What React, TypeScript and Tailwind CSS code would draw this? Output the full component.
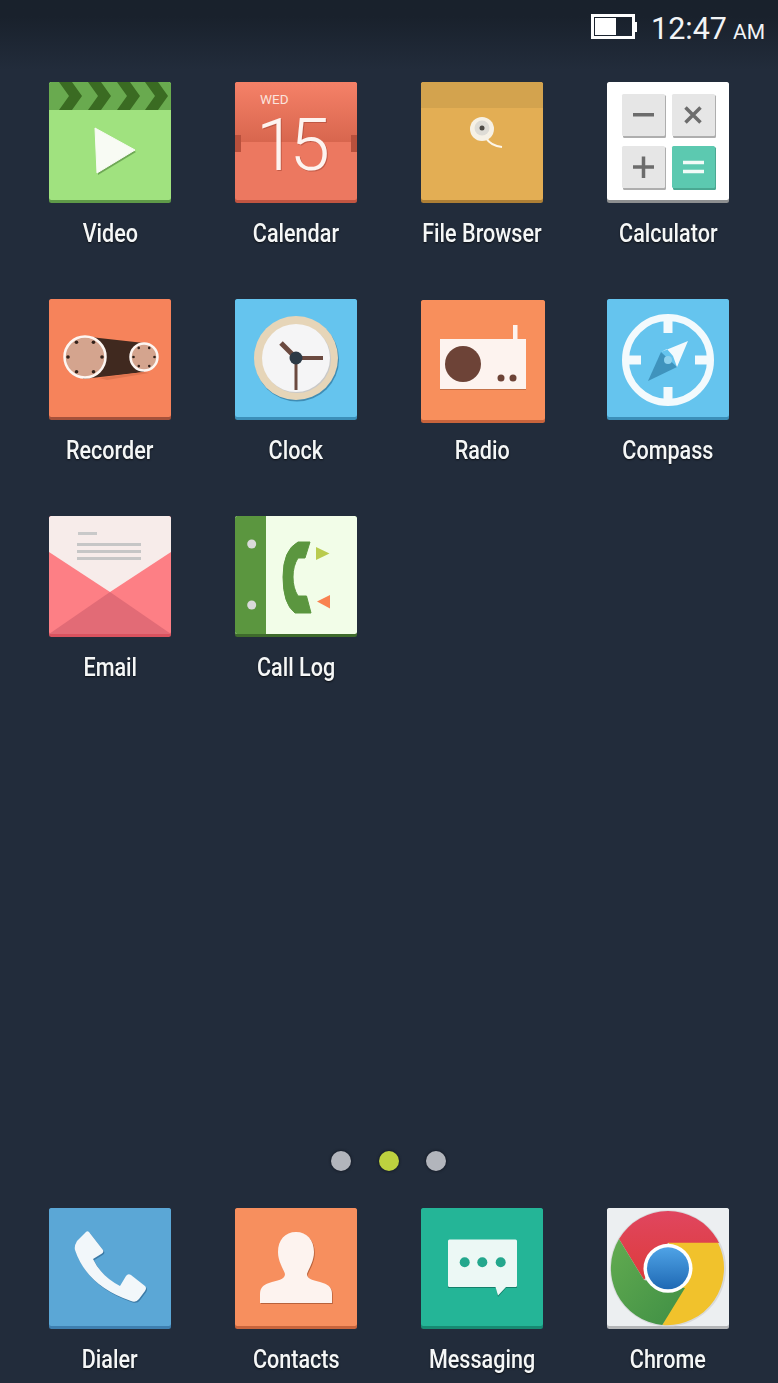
import React from "react";

function Tile({ fill, strip, children, w = 122, h = 121 }: { fill: string; strip: string; children?: React.ReactNode; w?: number; h?: number }) {
  return (
    <>
      <rect x="0" y="0" width={w} height={h} rx="2.5" fill={strip} />
      <rect x="0" y="0" width={w} height={h - 3} rx="2.5" fill={fill} />
      {children}
    </>
  );
}

const Video = () => (
  <Tile fill="#a0e27f" strip="#5f9a48">
    <path d="M2.5 0H119.5Q122 0 122 2.5V28H0V2.5Q0 0 2.5 0Z" fill="#69aa4f" />
    {[33, 62, 91, 119].map((t) => (
      <polygon key={t} points={`${t - 10},0 ${t},14 ${t - 10},28 ${t - 23},28 ${t - 13},14 ${t - 23},0`} fill="#3a6b22" />
    ))}
    <polygon points="47,48 87,70 49,93" fill="#6fa856" />
    <polygon points="46,46 86,68 48,91" fill="#f8fbf4" stroke="#f8fbf4" strokeWidth="1" strokeLinejoin="round" />
  </Tile>
);

const Calendar = () => (
  <Tile fill="#ec7860" strip="#c25541">
    <defs>
      <linearGradient id="calTop" x1="0" y1="0" x2="0" y2="1">
        <stop offset="0" stopColor="#f58168" />
        <stop offset="1" stopColor="#d8664e" />
      </linearGradient>
    </defs>
    <path d="M2.5 0H119.5Q122 0 122 2.5V60H0V2.5Q0 0 2.5 0Z" fill="url(#calTop)" />
    <rect x="0" y="53" width="6" height="17" fill="#b8503c" />
    <rect x="116" y="53" width="6" height="17" fill="#b8503c" />
    <text x="25" y="22" fontFamily="Roboto, sans-serif" fontSize="13.5" fill="#fbe3dc">WED</text>
    <text x="21" y="87.5" fontFamily="Roboto, sans-serif" fontWeight="300" fontSize="73" letterSpacing="-7" fill="#fdf3ef" className="[filter:drop-shadow(1.5px_1.5px_0_rgba(168,74,56,0.6))]">15</text>
  </Tile>
);

const FileBrowser = () => (
  <Tile fill="#e3ae54" strip="#ae7f35">
    <path d="M2.5 0H119.5Q122 0 122 2.5V26H0V2.5Q0 0 2.5 0Z" fill="#d3a34e" />
    <path d="M65 56Q70 64 81 65" fill="none" stroke="#fdf6e8" strokeWidth="2.2" />
    <circle cx="61" cy="47" r="12" fill="#f6f1e6" />
    <circle cx="61" cy="46" r="7.5" fill="#dedcd6" />
    <circle cx="61" cy="46" r="2.5" fill="#4d4a45" />
  </Tile>
);

const CalcKey = ({ x, y, fill = "#e6e6e6", shade = "#aeaeae", children }: { x: number; y: number; fill?: string; shade?: string; children?: React.ReactNode }) => (
  <g transform={`translate(${x},${y})`}>
    <rect x="1" y="1" width="43" height="43" rx="1.5" fill={shade} />
    <rect x="0" y="0" width="43" height="42" rx="1.5" fill={fill} />
    {children}
  </g>
);

const Calculator = () => (
  <Tile fill="#ffffff" strip="#8d8f90">
    <CalcKey x={15} y={12}>
      <rect x="11" y="19" width="21" height="3.5" fill="#6c6c6c" />
    </CalcKey>
    <CalcKey x={65} y={12}>
      <path d="M13.5 13.5L28.5 28.5M28.5 13.5L13.5 28.5" stroke="#6c6c6c" strokeWidth="3.5" />
    </CalcKey>
    <CalcKey x={15} y={64}>
      <path d="M11 21H32M21.5 10.5V32" stroke="#6c6c6c" strokeWidth="3.5" />
    </CalcKey>
    <CalcKey x={65} y={64} fill="#5cc9b0" shade="#4aa892">
      <path d="M11 16.5H32M11 25.5H32" stroke="#f2fbf8" strokeWidth="3.5" />
    </CalcKey>
  </Tile>
);

const reelDots = (cx: number, cy: number, r: number, n: number, off: number, dot: number) =>
  Array.from({ length: n }, (_, i) => {
    const a = off + (i * Math.PI * 2) / n;
    return <circle key={i} cx={cx + Math.cos(a) * r} cy={cy + Math.sin(a) * r} r={dot} fill="#33221b" />;
  });

const Recorder = () => (
  <Tile fill="#f6835b" strip="#a5513a">
    <polygon points="41,38 95,44 95,73 34,80" fill="#40291f" />
    <polygon points="50,79 95,73 100,74 58,81" fill="#e0754f" />
    <circle cx="36" cy="58" r="20.5" fill="#d4a48e" stroke="#fdf6f2" strokeWidth="2.5" />
    {reelDots(36, 58, 17, 6, -1.05, 1.8)}
    <circle cx="95" cy="58" r="13.5" fill="#d4a48e" stroke="#fdf6f2" strokeWidth="2.5" />
    {reelDots(95, 58, 10.5, 6, -1.05, 1.3)}
  </Tile>
);

const Clock = () => (
  <Tile fill="#65c4ee" strip="#3b8fb9">
    <circle cx="62" cy="60.5" r="42" fill="#3f8db5" />
    <circle cx="61" cy="59" r="42" fill="#e6d5b8" />
    <circle cx="62" cy="60" r="34" fill="#c9c9c9" />
    <circle cx="61" cy="59" r="34" fill="#f5f5f6" />
    <path d="M61 59H88" stroke="#6b4a40" strokeWidth="4" />
    <path d="M61 59V91" stroke="#6b4a40" strokeWidth="3" />
    <path d="M61 59L46 44" stroke="#6b4a40" strokeWidth="5" />
    <circle cx="61" cy="59" r="6.5" fill="#2c3a46" />
  </Tile>
);

const Radio = () => (
  <g transform="translate(0,1)">
    <Tile fill="#f88f5c" strip="#c8643c" w={124} h={123}>
      <rect x="92" y="25" width="4.5" height="15" fill="#fdf3ef" />
      <rect x="19" y="40" width="86" height="50" fill="#c4724a" />
      <rect x="19" y="39" width="86" height="50" fill="#fdf3ef" />
      <circle cx="42" cy="64" r="18" fill="#6d4337" />
      <circle cx="80" cy="78" r="3.5" fill="#6d4337" />
      <circle cx="92" cy="78" r="3.5" fill="#6d4337" />
    </Tile>
  </g>
);

const Compass = () => (
  <Tile fill="#65c4ee" strip="#3b8fb9">
    <circle cx="61" cy="61" r="42.5" fill="none" stroke="#f3fafd" strokeWidth="7" />
    <rect x="56.5" y="21" width="9" height="13" fill="#f3fafd" />
    <rect x="56.5" y="88" width="9" height="13" fill="#f3fafd" />
    <rect x="21" y="56.5" width="13" height="9" fill="#f3fafd" />
    <rect x="88" y="56.5" width="13" height="9" fill="#f3fafd" />
    <polygon points="41,82 54,53 70,68" fill="#3f93bd" />
    <polygon points="81,42 54,53 60,50 66,57 70,68" fill="#f3fafd" />
    <circle cx="61" cy="61" r="4" fill="#8fd2ee" />
  </Tile>
);

const Email = () => (
  <Tile fill="#fd7f85" strip="#d9535f">
    <path d="M2.5 0H119.5Q122 0 122 2.5V36L61 76L0 36V2.5Q0 0 2.5 0Z" fill="#f7ecea" />
    <polygon points="61,76 122,118 0,118" fill="#e26b76" />
    <rect x="29" y="16" width="19" height="3" fill="#c9c9c9" />
    <rect x="28" y="27" width="64" height="3" fill="#c6c6c6" />
    <rect x="28" y="34" width="64" height="3" fill="#c6c6c6" />
    <rect x="28" y="41" width="64" height="3" fill="#c6c6c6" />
  </Tile>
);

const CallLog = () => (
  <Tile fill="#f2fde8" strip="#3f6b2c">
    <path d="M2.5 0H31V118H2.5Q0 118 0 115.5V2.5Q0 0 2.5 0Z" fill="#5b963f" />
    <circle cx="16.7" cy="28" r="4.5" fill="#dadada" />
    <circle cx="16.7" cy="89" r="4.5" fill="#dadada" />
    <path d="M75 26L63 26Q48 34 48 61Q48 88 60 97L76 97L71.5 80L63 80Q58 72 58 61Q58 50 63 42L70 42Z" fill="#5b963f" stroke="#5b963f" strokeWidth="1" strokeLinejoin="round" />
    <polygon points="81,31 94.5,37.5 81,44" fill="#b9cb4e" />
    <polygon points="95,79 82,85.5 95,92.5" fill="#f98250" />
  </Tile>
);

const handset = "M40 24L54 42Q55 44 53 45.5L44 51Q52 68 71 78L77 68Q79 65 82 67L96 78Q98 80 96 83L90 91Q87 95 82 93Q38 78 26 42Q25 38 28 33L36 25Q38 22 40 24Z";

const Dialer = () => (
  <Tile fill="#5ba7d6" strip="#3e7fb0">
    <path d={handset} fill="#3c7aa6" transform="translate(1,1.2)" />
    <path d={handset} fill="#f2f7fa" />
  </Tile>
);

const person = "M61 24C72 24 79 32 79 44C79 54 73 62 72 66C72 72 80 72 88 75C94 77 97 80 97 86L97 95L25 95L25 86C25 80 28 77 34 75C42 72 50 72 50 66C49 62 43 54 43 44C43 32 50 24 61 24Z";

const Contacts = () => (
  <Tile fill="#f78f5e" strip="#c8643c">
    <path d={person} fill="#b8623c" transform="translate(0.8,1)" />
    <path d={person} fill="#fdf3ef" />
  </Tile>
);

const Messaging = () => (
  <Tile fill="#24b597" strip="#178a72">
    <path d="M27 33H96V80H85L77 89L75 80H27Z" fill="#14806b" />
    <path d="M28.5 31.5H94.5Q96 31.5 96 33V77.5Q96 79 94.5 79H85L77 87.5L74.5 79H28.5Q27 79 27 77.5V33Q27 31.5 28.5 31.5Z" fill="#ecf8f5" />
    <circle cx="43.7" cy="54.3" r="5" fill="#24a78d" />
    <circle cx="61.3" cy="54.3" r="5" fill="#24a78d" />
    <circle cx="79.7" cy="54.3" r="5" fill="#24a78d" />
  </Tile>
);

const Chrome = () => (
  <Tile fill="#eceff1" strip="#b4b6b8">
    <defs>
      <linearGradient id="chRed" x1="0" y1="0" x2="0" y2="1">
        <stop offset="0" stopColor="#e0465f" />
        <stop offset="1" stopColor="#dd3b3b" />
      </linearGradient>
      <linearGradient id="chGreen" x1="0" y1="0" x2="1" y2="1">
        <stop offset="0" stopColor="#62ab50" />
        <stop offset="1" stopColor="#3f8f45" />
      </linearGradient>
      <linearGradient id="chBlue" x1="0" y1="0" x2="0" y2="1">
        <stop offset="0" stopColor="#4fa3e6" />
        <stop offset="1" stopColor="#1f69b4" />
      </linearGradient>
    </defs>
    <circle cx="61" cy="60.3" r="58" fill="#d8dadc" />
    <path d="M110 31A57 57 0 0 0 12 31L37 72L61 35H112Z" fill="url(#chRed)" />
    <path d="M111 34.7L61 34.7L85 60L55.3 117A57 57 0 0 0 111 34.7Z" fill="#f1c22c" />
    <path d="M12 31A57 57 0 0 0 55.3 117L78 80L37 72Z" fill="url(#chGreen)" />
    <circle cx="61" cy="60.3" r="24.5" fill="#ffffff" />
    <circle cx="61" cy="60.3" r="21" fill="url(#chBlue)" />
  </Tile>
);

type AppItem = { name: string; icon: React.ReactNode };

const rows: AppItem[] = [
  { name: "Video", icon: <Video /> },
  { name: "Calendar", icon: <Calendar /> },
  { name: "File Browser", icon: <FileBrowser /> },
  { name: "Calculator", icon: <Calculator /> },
  { name: "Recorder", icon: <Recorder /> },
  { name: "Clock", icon: <Clock /> },
  { name: "Radio", icon: <Radio /> },
  { name: "Compass", icon: <Compass /> },
  { name: "Email", icon: <Email /> },
  { name: "Call Log", icon: <CallLog /> },
];

const dock: AppItem[] = [
  { name: "Dialer", icon: <Dialer /> },
  { name: "Contacts", icon: <Contacts /> },
  { name: "Messaging", icon: <Messaging /> },
  { name: "Chrome", icon: <Chrome /> },
];

function AppCell({ item, cellClass }: { item: AppItem; cellClass: string }) {
  return (
    <div className={`flex flex-col items-center ${cellClass}`}>
      <svg width="122" height="122" viewBox="0 0 122 122" className="block overflow-visible">
        {item.icon}
      </svg>
      <span className="mt-[14px] h-[30px] whitespace-nowrap text-[26px] font-medium leading-[30px] text-[#f5f7f7] scale-x-[0.83] [text-shadow:0_1px_2px_rgba(0,0,0,0.7)]">
        {item.name}
      </span>
    </div>
  );
}

export default function App() {
  return (
    <div className="flex h-[1383px] w-[778px] flex-col overflow-hidden bg-[#222c3b] font-['Roboto',sans-serif]">
      <div className="flex h-[82px] shrink-0 items-start justify-end bg-gradient-to-b from-[#19212c] from-20% to-[#222c3b] to-85% pr-[13px] pt-[9px]">
        <div className="mr-[14px] mt-[5px] flex items-center">
          <div className="h-[25px] w-[44px] border-[3px] border-white p-px">
            <div className="h-full w-[21px] bg-white" />
          </div>
          <div className="h-[10px] w-[2px] bg-white" />
        </div>
        <span className="text-[30.5px] font-normal leading-[40px] text-[#f2f4f6]">12:47</span>
        <span className="ml-[6px] mt-[8px] text-[21px] leading-[30px] text-[#f2f4f6]">AM</span>
      </div>
      <div className="grid shrink-0 grid-cols-[repeat(4,186px)] px-[17px]">
        {rows.map((item) => (
          <AppCell key={item.name} item={item} cellClass="h-[217px]" />
        ))}
      </div>
      <div className="flex-1" />
      <div className="mb-[37px] flex h-[20px] shrink-0 items-center pl-[331px]">
        <div className="h-[20px] w-[20px] rounded-full bg-[#b2b5bc] shadow-[0_0_2px_1px_rgba(15,20,30,0.5)]" />
        <div className="ml-[28px] h-[20px] w-[20px] rounded-full bg-[#bdd13f] shadow-[0_0_2px_1px_rgba(15,20,30,0.5)]" />
        <div className="ml-[27px] h-[20px] w-[20px] rounded-full bg-[#b2b5bc] shadow-[0_0_2px_1px_rgba(15,20,30,0.5)]" />
      </div>
      <div className="grid shrink-0 grid-cols-[repeat(4,186px)] px-[17px]">
        {dock.map((item) => (
          <AppCell key={item.name} item={item} cellClass="h-[175px]" />
        ))}
      </div>
    </div>
  );
}
